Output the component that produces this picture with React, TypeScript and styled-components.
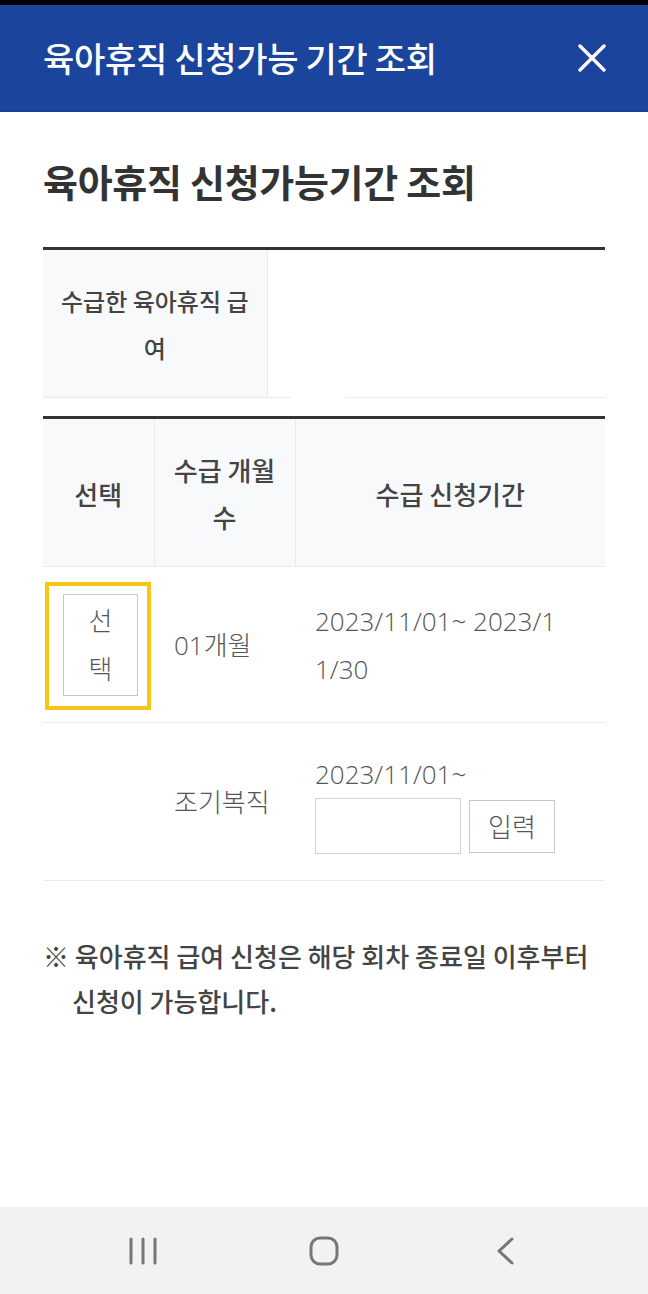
import styled, { createGlobalStyle } from "styled-components";

const GlobalStyle = createGlobalStyle`
  html, body {
    margin: 0;
    padding: 0;
    background: #fff;
  }
  body {
    font-family: "Noto Sans CJK KR", "Noto Sans", sans-serif;
    color: #333;
  }
  * {
    box-sizing: border-box;
  }
`;

const Screen = styled.div`
  display: flex;
  flex-direction: column;
  min-height: 100vh;
  width: 648px;
`;

const StatusBar = styled.div`
  height: 5px;
  background: #000;
`;

const Header = styled.header`
  display: flex;
  align-items: center;
  justify-content: space-between;
  height: 107px;
  padding: 0 40px 0 43px;
  background: #1b449d;
  border-bottom: 2px solid #183f92;
`;

const HeaderTitle = styled.h1`
  margin: 0;
  font-size: 34px;
  font-weight: 500;
  color: #fff;
  letter-spacing: -0.3px;
`;

const CloseButton = styled.button`
  display: flex;
  align-items: center;
  justify-content: center;
  width: 32px;
  height: 32px;
  padding: 0;
  border: 0;
  background: none;
`;

const Content = styled.main`
  padding: 41px 43px 0;
`;

const PageTitle = styled.h2`
  margin: 0 0 38px;
  font-size: 38px;
  line-height: 56px;
  font-weight: 700;
  color: #333;
  letter-spacing: -0.3px;
`;

const Table = styled.table<{ $gap?: number }>`
  width: 100%;
  border-collapse: collapse;
  table-layout: fixed;
  border-top: 3px solid #333;
  margin-top: ${(p) => p.$gap ?? 0}px;
`;

const HeadCell = styled.th<{ $last?: boolean }>`
  padding: 27px 12px 26px;
  background: #f8f9fb;
  border-bottom: 1px solid #ececec;
  border-right: ${(p) => (p.$last ? "0" : "1px solid #e8e9eb")};
  font-size: 24px;
  line-height: 47px;
  font-weight: 500;
  color: #444;
  text-align: center;
  vertical-align: middle;
  word-break: break-all;
`;

const ColHead = styled(HeadCell)`
  padding: 27px 10px 26px;
  font-size: 26px;
`;

const BlankCell = styled.td`
  background: linear-gradient(
      to right,
      #ececec 23px,
      transparent 23px,
      transparent 78px,
      #ececec 78px
    )
    bottom / 100% 1px no-repeat;
`;

const Cell = styled.td<{ $padRight?: number }>`
  padding: 27px ${(p) => p.$padRight ?? 20}px 26px 20px;
  border-bottom: 1px solid #ececec;
  font-family: "Open Sans", "Noto Sans CJK KR", sans-serif;
  font-size: 26px;
  line-height: 48px;
  font-weight: 300;
  color: #555;
  text-align: left;
  vertical-align: middle;
  word-break: break-all;
`;

const Focus = styled.span`
  display: inline-block;
  margin: -12px -13px -14px -18px;
  padding: 8px 9px 10px 14px;
  border: 4px solid #f6c516;
  vertical-align: middle;
`;

const SelectButton = styled.button`
  display: block;
  width: 75px;
  padding: 2px 14px;
  border: 1px solid #c8c8c8;
  background: #fff;
  font-family: inherit;
  font-size: 26px;
  line-height: 48px;
  font-weight: 300;
  color: #555;
  word-break: break-all;
`;

const EntryRow = styled.div`
  display: flex;
  align-items: center;
  gap: 8px;
`;

const DateInput = styled.input`
  width: 146px;
  height: 56px;
  border: 1px solid #d2d2d2;
  background: #fff;
`;

const SmallButton = styled.button`
  width: 86px;
  height: 53px;
  padding: 0;
  border: 1px solid #c8c8c8;
  background: #fff;
  font-family: inherit;
  font-size: 26px;
  font-weight: 300;
  color: #555;
`;

const Notice = styled.p`
  margin: 52px 0 0;
  padding-left: 29px;
  text-indent: -29px;
  font-size: 26px;
  line-height: 45px;
  font-weight: 500;
  color: #444;
`;

const NavBar = styled.nav`
  display: flex;
  align-items: center;
  justify-content: center;
  gap: 151px;
  height: 87px;
  margin-top: auto;
  background: #f2f2f2;
`;

const NavIcon = styled.svg`
  width: 30px;
  height: 30px;
  color: #777;
`;

export default function App() {
  return (
    <Screen>
      <GlobalStyle />
      <StatusBar />
      <Header>
        <HeaderTitle>육아휴직 신청가능 기간 조회</HeaderTitle>
        <CloseButton aria-label="닫기">
          <svg width="28" height="28" viewBox="0 0 28 28">
            <path
              d="M2 2 L26 26 M26 2 L2 26"
              stroke="#fff"
              strokeWidth="3.4"
              strokeLinecap="round"
            />
          </svg>
        </CloseButton>
      </Header>

      <Content>
        <PageTitle>육아휴직 신청가능기간 조회</PageTitle>

        <Table>
          <colgroup>
            <col style={{ width: 224 }} />
            <col />
          </colgroup>
          <tbody>
            <tr>
              <HeadCell>수급한 육아휴직 급여</HeadCell>
              <BlankCell />
            </tr>
          </tbody>
        </Table>

        <Table $gap={18}>
          <colgroup>
            <col style={{ width: 111 }} />
            <col style={{ width: 141 }} />
            <col />
          </colgroup>
          <thead>
            <tr>
              <ColHead>선택</ColHead>
              <ColHead>수급 개월수</ColHead>
              <ColHead $last>수급 신청기간</ColHead>
            </tr>
          </thead>
          <tbody>
            <tr>
              <Cell>
                <Focus>
                  <SelectButton>선택</SelectButton>
                </Focus>
              </Cell>
              <Cell>01개월</Cell>
              <Cell $padRight={38}>2023/11/01~ 2023/11/30</Cell>
            </tr>
            <tr>
              <Cell />
              <Cell>조기복직</Cell>
              <Cell>
                2023/11/01~
                <EntryRow>
                  <DateInput type="text" />
                  <SmallButton>입력</SmallButton>
                </EntryRow>
              </Cell>
            </tr>
          </tbody>
        </Table>

        <Notice>※ 육아휴직 급여 신청은 해당 회차 종료일 이후부터 신청이 가능합니다.</Notice>
      </Content>

      <NavBar>
        <NavIcon viewBox="0 0 30 30">
          <path
            d="M3 3 V27 M15 3 V27 M27 3 V27"
            stroke="currentColor"
            strokeWidth="3"
            strokeLinecap="round"
          />
        </NavIcon>
        <NavIcon viewBox="0 0 30 30">
          <rect
            x="2"
            y="2"
            width="26"
            height="26"
            rx="9"
            fill="none"
            stroke="currentColor"
            strokeWidth="3"
          />
        </NavIcon>
        <NavIcon viewBox="0 0 30 30">
          <path
            d="M22 3 L9 15 L22 27"
            fill="none"
            stroke="currentColor"
            strokeWidth="3"
            strokeLinecap="round"
            strokeLinejoin="round"
          />
        </NavIcon>
      </NavBar>
    </Screen>
  );
}
